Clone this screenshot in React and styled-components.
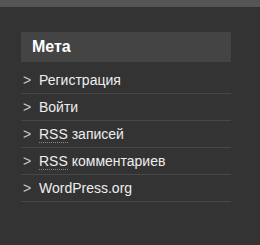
import React from 'react';
import styled, { createGlobalStyle } from 'styled-components';

const GlobalStyle = createGlobalStyle`
  html, body {
    margin: 0;
    padding: 0;
    background: #333333;
  }
  body {
    font-family: "Liberation Sans", Arial, sans-serif;
  }
`;

const Page = styled.div`
  width: 260px;
  height: 245px;
  background: #333333;
  border-top: 7px solid #555555;
  box-sizing: border-box;
  padding: 25px 0 0 21px;
`;

const Widget = styled.aside`
  width: 210px;
`;

const WidgetTitle = styled.h3`
  margin: 0;
  height: 30px;
  background: #444444;
  color: #ffffff;
  font-size: 16px;
  font-weight: bold;
  line-height: 30px;
  padding: 0 11px;
`;

const List = styled.ul`
  list-style: none;
  margin: 5px 0 0;
  padding: 0;
`;

const Item = styled.li`
  display: flex;
  align-items: baseline;
  padding: 4px 0 4px 2px;
  border-bottom: 1px solid #474747;
  font-size: 14px;
  line-height: 18px;
  color: #eeeeee;
`;

const Arrow = styled.span`
  display: inline-block;
  width: 16px;
  color: #c8c8c8;
`;

const Link = styled.a`
  color: #eeeeee;
  text-decoration: none;
`;

const Abbr = styled.abbr`
  text-decoration: none;
  border-bottom: 1px dotted #8a8a8a;
`;

const links = [
  { label: 'Регистрация' },
  { label: 'Войти' },
  { abbr: 'RSS', label: ' записей' },
  { abbr: 'RSS', label: ' комментариев' },
  { label: 'WordPress.org' },
];

export default function App() {
  return (
    <>
      <GlobalStyle />
      <Page>
        <Widget>
          <WidgetTitle>Мета</WidgetTitle>
          <List>
            {links.map((l, i) => (
              <Item key={i}>
                <Arrow>&gt;</Arrow>
                <Link href="#">
                  {l.abbr && <Abbr title="Really Simple Syndication">{l.abbr}</Abbr>}
                  {l.label}
                </Link>
              </Item>
            ))}
          </List>
        </Widget>
      </Page>
    </>
  );
}
